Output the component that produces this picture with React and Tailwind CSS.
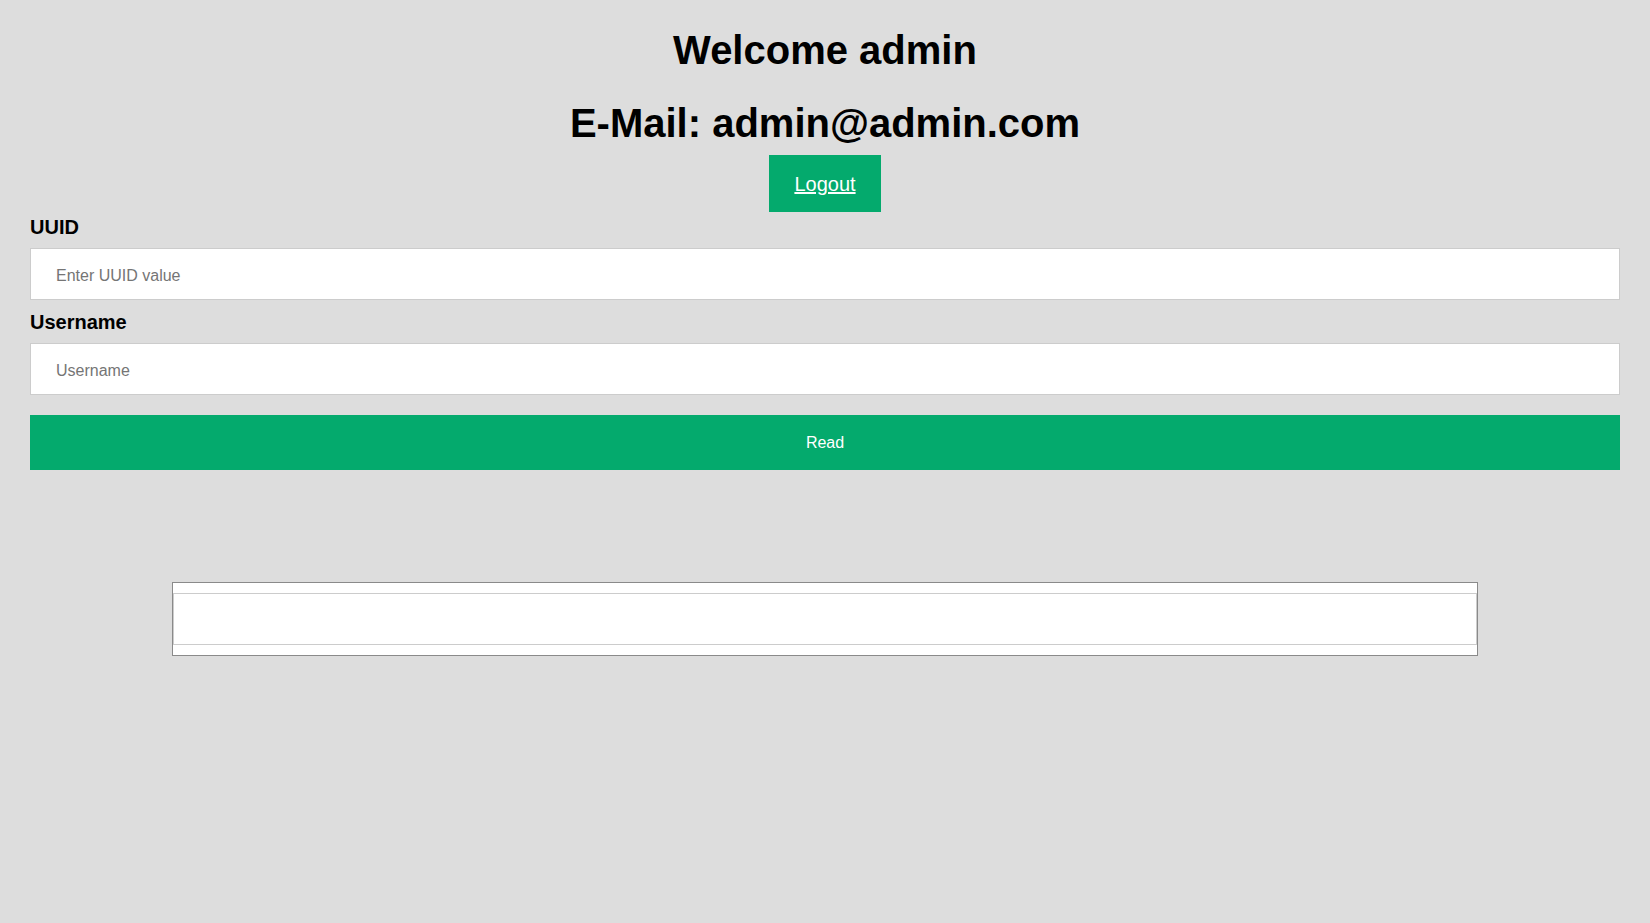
export default function App() {
  return (
    <div className="min-h-screen bg-[#dddddd] px-[30px] pt-[27px] font-['Liberation_Sans',Arial,sans-serif] text-black">
      <h1 className="text-center text-[40px] leading-[46px] font-bold">Welcome admin</h1>
      <h1 className="mt-[27px] text-center text-[40px] leading-[46px] font-bold">
        E-Mail: admin@admin.com
      </h1>

      <div className="mt-[9px] flex justify-center">
        <a
          href="#"
          className="flex h-[57px] w-[112px] items-center justify-center bg-[#04AA6D] text-[20px] text-white underline"
        >
          Logout
        </a>
      </div>

      <label className="mt-[4px] block text-[20px] leading-[23px] font-bold">UUID</label>
      <input
        type="text"
        placeholder="Enter UUID value"
        className="mt-[9px] block h-[52px] w-full border border-[#cccccc] bg-white px-[25px] pt-[3px] text-[16px] outline-none placeholder:text-[#757575]"
      />

      <label className="mt-[11px] block text-[20px] leading-[23px] font-bold">Username</label>
      <input
        type="text"
        placeholder="Username"
        className="mt-[9px] block h-[52px] w-full border border-[#cccccc] bg-white px-[25px] pt-[3px] text-[16px] outline-none placeholder:text-[#757575]"
      />

      <button
        type="button"
        className="mt-[20px] block h-[55px] w-full bg-[#04AA6D] pt-[1px] text-[16px] text-white"
      >
        Read
      </button>

      <div className="mx-[142px] mt-[112px] border border-[#8a8a8a] bg-white py-[10px]">
        <div className="h-[52px] border border-[#cccccc]" />
      </div>
    </div>
  );
}
